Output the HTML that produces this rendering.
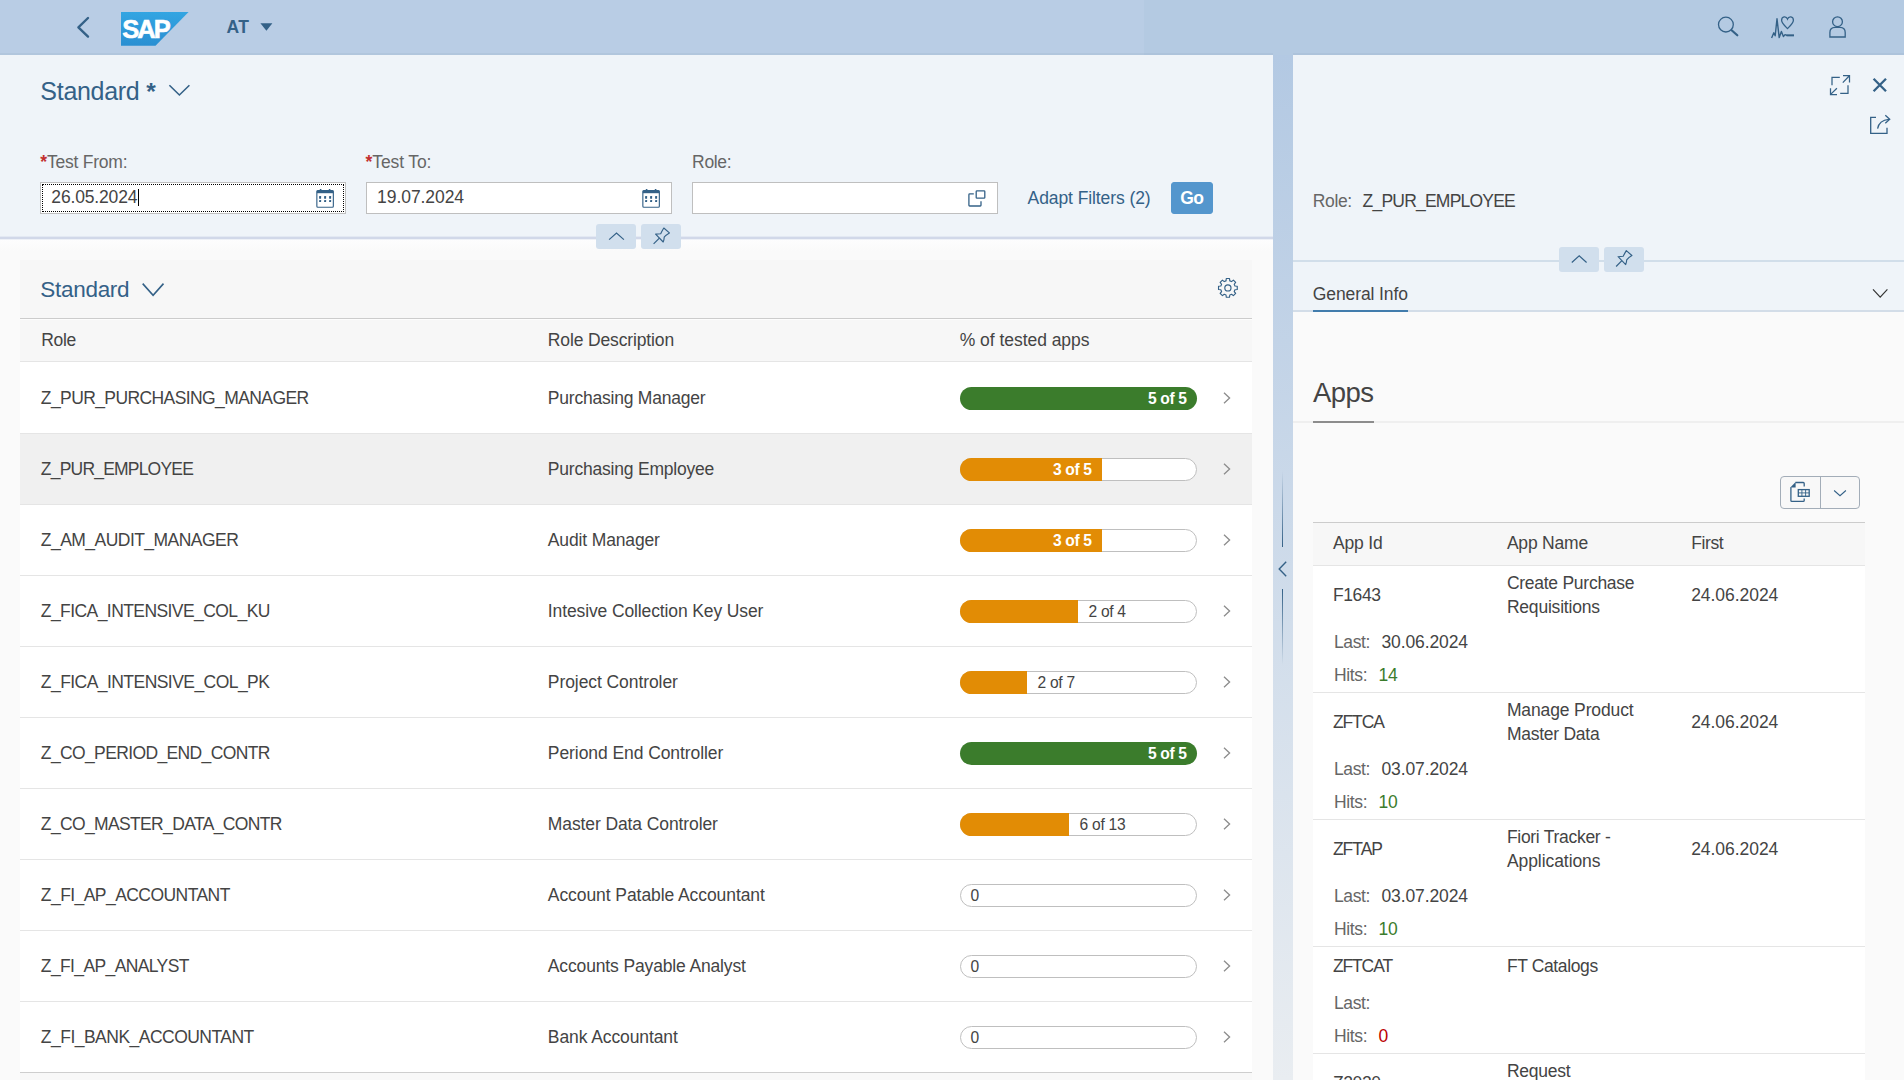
<!DOCTYPE html>
<html lang="en"><head><meta charset="utf-8"><title>Fiori Tracker</title>
<style>
*{box-sizing:border-box;margin:0;padding:0}
html,body{width:1904px;height:1080px;overflow:hidden}
body{position:relative;font-family:"Liberation Sans",sans-serif;font-size:17.5px;color:#333;background:linear-gradient(to bottom,#b3c9e3 0,#b3c9e3 55px,#e9edf1 100%)}
.t{position:absolute;white-space:nowrap;line-height:20px;display:block}
.a{position:absolute;display:block}
svg{position:absolute;display:block;overflow:visible}

</style></head>
<body>
<div class="a" style="left:0px;top:0px;width:1904px;height:55px;background:#b9cde5;"></div>
<div class="a" style="left:1144px;top:0px;width:760px;height:55px;background:#b4cae2;"></div>
<div class="a" style="left:0px;top:53px;width:1273px;height:2px;background:rgba(150,175,195,.22);"></div>
<div class="a" style="left:1293px;top:53px;width:611px;height:2px;background:rgba(150,175,195,.22);"></div>
<div class="a" style="left:0px;top:55px;width:1273px;height:181px;background:#eff4f9;"></div>
<div class="a" style="left:0px;top:239px;width:1273px;height:841px;background:#fafafa;"></div>
<div class="a" style="left:0px;top:239px;width:1273px;height:12px;background:linear-gradient(to bottom,#fdfdfe,#fafafa);"></div>
<div class="a" style="left:0px;top:236px;width:1273px;height:1px;background:#e3e9f3;"></div>
<div class="a" style="left:0px;top:237px;width:1273px;height:2px;background:#d1d8e9;"></div>
<div class="a" style="left:0px;top:239px;width:1273px;height:1px;background:#eef1f7;"></div>
<div class="a" style="left:40px;top:182px;width:306px;height:32px;background:#fff;border:1px solid #bfbfbf;outline:1px dotted #000;outline-offset:-3px;"></div>
<div class="a" style="left:366px;top:182px;width:306px;height:32px;background:#fff;border:1px solid #bfbfbf;"></div>
<div class="a" style="left:692px;top:182px;width:306px;height:32px;background:#fff;border:1px solid #bfbfbf;"></div>
<div class="a" style="left:138px;top:189px;width:1px;height:17px;background:#000;"></div>
<div class="a" style="left:1171px;top:182px;width:42px;height:32px;background:#5496cd;border-radius:3px;border:1px solid #5496cd;"></div>
<div class="a" style="left:596px;top:224px;width:40px;height:25px;background:#d1dfed;border-radius:3px;"></div>
<div class="a" style="left:641px;top:224px;width:40px;height:25px;background:#d1dfed;border-radius:3px;"></div>
<div class="a" style="left:20px;top:260px;width:1232px;height:58px;background:#f7f7f7;"></div>
<div class="a" style="left:20px;top:318px;width:1232px;height:1px;background:#cccccc;"></div>
<div class="a" style="left:20px;top:319px;width:1232px;height:42px;background:#f7f7f7;"></div>
<div class="a" style="left:20px;top:361px;width:1232px;height:1px;background:#e5e5e5;"></div>
<div class="a" style="left:20px;top:362px;width:1232px;height:711px;background:#fff;"></div>
<div class="a" style="left:20px;top:434px;width:1232px;height:70px;background:#f0f0f0;"></div>
<div class="a" style="left:20px;top:433px;width:1232px;height:1px;background:#e5e5e5;"></div>
<div class="a" style="left:20px;top:504px;width:1232px;height:1px;background:#e5e5e5;"></div>
<div class="a" style="left:20px;top:575px;width:1232px;height:1px;background:#e5e5e5;"></div>
<div class="a" style="left:20px;top:646px;width:1232px;height:1px;background:#e5e5e5;"></div>
<div class="a" style="left:20px;top:717px;width:1232px;height:1px;background:#e5e5e5;"></div>
<div class="a" style="left:20px;top:788px;width:1232px;height:1px;background:#e5e5e5;"></div>
<div class="a" style="left:20px;top:859px;width:1232px;height:1px;background:#e5e5e5;"></div>
<div class="a" style="left:20px;top:930px;width:1232px;height:1px;background:#e5e5e5;"></div>
<div class="a" style="left:20px;top:1001px;width:1232px;height:1px;background:#e5e5e5;"></div>
<div class="a" style="left:20px;top:1072px;width:1232px;height:1px;background:#e5e5e5;"></div>
<div class="a" style="left:20px;top:319px;width:1232px;height:1px;background:#fdfdfd;"></div>
<div class="a" style="left:20px;top:1072px;width:1232px;height:1px;background:#cecece;"></div>
<div class="a" style="left:20px;top:1073px;width:1232px;height:7px;background:#f8f8f8;"></div>
<div class="a" style="left:960px;top:387px;width:237px;height:23px;background:#3b7c2c;border-radius:11.5px;"></div>
<svg style="left:1223px;top:392px" width="8" height="12" viewBox="0 0 8 12"><path d="M1 .7 L6.6 6 L1 11.3" fill="none" stroke="#8c8c8c" stroke-width="1.3"/></svg>
<div class="a" style="left:960px;top:458px;width:237px;height:23px;background:#fff;border:1px solid #bfbfbf;border-radius:11.5px;"></div>
<div class="a" style="left:960px;top:458px;width:142px;height:23px;background:#e28c05;border-radius:11.5px 0 0 11.5px;"></div>
<svg style="left:1223px;top:463px" width="8" height="12" viewBox="0 0 8 12"><path d="M1 .7 L6.6 6 L1 11.3" fill="none" stroke="#8c8c8c" stroke-width="1.3"/></svg>
<div class="a" style="left:960px;top:529px;width:237px;height:23px;background:#fff;border:1px solid #bfbfbf;border-radius:11.5px;"></div>
<div class="a" style="left:960px;top:529px;width:142px;height:23px;background:#e28c05;border-radius:11.5px 0 0 11.5px;"></div>
<svg style="left:1223px;top:534px" width="8" height="12" viewBox="0 0 8 12"><path d="M1 .7 L6.6 6 L1 11.3" fill="none" stroke="#8c8c8c" stroke-width="1.3"/></svg>
<div class="a" style="left:960px;top:600px;width:237px;height:23px;background:#fff;border:1px solid #bfbfbf;border-radius:11.5px;"></div>
<div class="a" style="left:960px;top:600px;width:118px;height:23px;background:#e28c05;border-radius:11.5px 0 0 11.5px;"></div>
<svg style="left:1223px;top:605px" width="8" height="12" viewBox="0 0 8 12"><path d="M1 .7 L6.6 6 L1 11.3" fill="none" stroke="#8c8c8c" stroke-width="1.3"/></svg>
<div class="a" style="left:960px;top:671px;width:237px;height:23px;background:#fff;border:1px solid #bfbfbf;border-radius:11.5px;"></div>
<div class="a" style="left:960px;top:671px;width:67px;height:23px;background:#e28c05;border-radius:11.5px 0 0 11.5px;"></div>
<svg style="left:1223px;top:676px" width="8" height="12" viewBox="0 0 8 12"><path d="M1 .7 L6.6 6 L1 11.3" fill="none" stroke="#8c8c8c" stroke-width="1.3"/></svg>
<div class="a" style="left:960px;top:742px;width:237px;height:23px;background:#3b7c2c;border-radius:11.5px;"></div>
<svg style="left:1223px;top:747px" width="8" height="12" viewBox="0 0 8 12"><path d="M1 .7 L6.6 6 L1 11.3" fill="none" stroke="#8c8c8c" stroke-width="1.3"/></svg>
<div class="a" style="left:960px;top:813px;width:237px;height:23px;background:#fff;border:1px solid #bfbfbf;border-radius:11.5px;"></div>
<div class="a" style="left:960px;top:813px;width:109px;height:23px;background:#e28c05;border-radius:11.5px 0 0 11.5px;"></div>
<svg style="left:1223px;top:818px" width="8" height="12" viewBox="0 0 8 12"><path d="M1 .7 L6.6 6 L1 11.3" fill="none" stroke="#8c8c8c" stroke-width="1.3"/></svg>
<div class="a" style="left:960px;top:884px;width:237px;height:23px;background:#fff;border:1px solid #bfbfbf;border-radius:11.5px;"></div>
<svg style="left:1223px;top:889px" width="8" height="12" viewBox="0 0 8 12"><path d="M1 .7 L6.6 6 L1 11.3" fill="none" stroke="#8c8c8c" stroke-width="1.3"/></svg>
<div class="a" style="left:960px;top:955px;width:237px;height:23px;background:#fff;border:1px solid #bfbfbf;border-radius:11.5px;"></div>
<svg style="left:1223px;top:960px" width="8" height="12" viewBox="0 0 8 12"><path d="M1 .7 L6.6 6 L1 11.3" fill="none" stroke="#8c8c8c" stroke-width="1.3"/></svg>
<div class="a" style="left:960px;top:1026px;width:237px;height:23px;background:#fff;border:1px solid #bfbfbf;border-radius:11.5px;"></div>
<svg style="left:1223px;top:1031px" width="8" height="12" viewBox="0 0 8 12"><path d="M1 .7 L6.6 6 L1 11.3" fill="none" stroke="#8c8c8c" stroke-width="1.3"/></svg>
<div class="a" style="left:1282px;top:471px;width:1px;height:76px;background:linear-gradient(to bottom,rgba(52,97,135,0),rgba(52,97,135,1))"></div>
<div class="a" style="left:1282px;top:589px;width:1px;height:76px;background:linear-gradient(to bottom,rgba(52,97,135,1),rgba(52,97,135,0))"></div>
<svg style="left:1278px;top:561px" width="9" height="16" viewBox="0 0 9 16"><path d="M8.2 .8 L1.2 8 L8.2 15.2" fill="none" stroke="#346187" stroke-width="1.4"/></svg>
<div class="a" style="left:1293px;top:55px;width:611px;height:257px;background:#eff4f9;"></div>
<div class="a" style="left:1293px;top:260px;width:611px;height:2px;background:#d1deea;"></div>
<div class="a" style="left:1293px;top:310px;width:611px;height:2px;background:#d3dde8;"></div>
<div class="a" style="left:1293px;top:312px;width:611px;height:768px;background:#fafafa;"></div>
<div class="a" style="left:1313px;top:310px;width:95px;height:2px;background:#427cac;"></div>
<div class="a" style="left:1559px;top:247px;width:40px;height:25px;background:#d1dfed;border-radius:3px;"></div>
<div class="a" style="left:1604px;top:247px;width:40px;height:25px;background:#d1dfed;border-radius:3px;"></div>
<div class="a" style="left:1293px;top:421px;width:611px;height:2px;background:#efefef;"></div>
<div class="a" style="left:1313px;top:421px;width:61px;height:2px;background:#8c8c8c;"></div>
<div class="a" style="left:1780px;top:476px;width:80px;height:33px;background:#f8f8f8;border:1px solid #a3adb8;border-radius:4px;"></div>
<div class="a" style="left:1820px;top:477px;width:1px;height:31px;background:#a3adb8;"></div>
<div class="a" style="left:1313px;top:522px;width:552px;height:1px;background:#cccccc;"></div>
<div class="a" style="left:1313px;top:523px;width:552px;height:42px;background:#f7f7f7;"></div>
<div class="a" style="left:1313px;top:565px;width:552px;height:1px;background:#e5e5e5;"></div>
<div class="a" style="left:1313px;top:566px;width:552px;height:514px;background:#fff;"></div>
<div class="a" style="left:1313px;top:692px;width:552px;height:1px;background:#e5e5e5;"></div>
<div class="a" style="left:1313px;top:819px;width:552px;height:1px;background:#e5e5e5;"></div>
<div class="a" style="left:1313px;top:946px;width:552px;height:1px;background:#e5e5e5;"></div>
<div class="a" style="left:1313px;top:1053px;width:552px;height:1px;background:#e5e5e5;"></div><svg style="left:0;top:0" width="1904" height="1080" viewBox="0 0 1904 1080"><path d="M88 18 L78.4 27.3 L88 36.6" fill="none" stroke="#346187" stroke-width="2.4" stroke-linejoin="round" stroke-linecap="round"/>
<defs><linearGradient id="sapg" x1="0" y1="0" x2="0" y2="1"><stop offset="0" stop-color="#33a5e2"/><stop offset="1" stop-color="#2a8fd2"/></linearGradient></defs>
<path d="M121 12 H188.6 L155.5 45.8 H121 Z" fill="url(#sapg)"/>
<text x="122.2" y="38.3" font-family="Liberation Sans, sans-serif" font-weight="bold" font-size="25.5" letter-spacing="-1.9" fill="#fff" stroke="#fff" stroke-width="0.6">SAP</text>
<path d="M260.4 23.2 H272.4 L266.4 30.8 Z" fill="#346187"/>
<circle cx="1725.9" cy="24.6" r="7.4" fill="none" stroke="#346187" stroke-width="1.3"/>
<path d="M1731.6 30.2 L1737.3 35.3" fill="none" stroke="#346187" stroke-width="2.2" stroke-linecap="round"/>
<path d="M1771.6 38 L1773.8 32.8 L1775.2 35.8 L1777 18.8 L1779.2 37.6 L1781.4 31.4 L1783.4 36.6 L1785 34.6 L1787 35.4 H1794" fill="none" stroke="#346187" stroke-width="1.4" stroke-linejoin="round"/>
<path d="M1786.5 35.4 H1794" fill="none" stroke="#346187" stroke-width="1.9" />
<path d="M1787.5 28.6 C1784.5 25.5 1781.6 23 1781.6 20.2 C1781.6 16 1786.3 15.8 1787.5 19 C1788.7 15.8 1793.4 16 1793.4 20.2 C1793.4 23 1790.5 25.5 1787.5 28.6 Z" fill="none" stroke="#346187" stroke-width="1.3" />
<circle cx="1837.5" cy="21.7" r="4.9" fill="none" stroke="#346187" stroke-width="1.3"/>
<path d="M1829.9 37 V32.4 Q1829.9 27.6 1835 27.4 H1840 Q1845.2 27.6 1845.2 32.4 V37 Z" fill="none" stroke="#346187" stroke-width="1.3" />
<path d="M169.4 85.2 L179.4 95.0 L189.4 85.2" fill="none" stroke="#346187" stroke-width="1.6" />
<rect x="316.84999999999997" y="190.6" width="16.5" height="16.6" rx="1" fill="none" stroke="#346187" stroke-width="1.15"/>
<rect x="316.84999999999997" y="190.6" width="16.5" height="2.6" fill="#346187"/>
<rect x="319.8" y="189" width="1.6" height="2" fill="#346187"/><rect x="328.8" y="189" width="1.6" height="2" fill="#346187"/>
<rect x="319.09999999999997" y="196" width="2" height="2.7" rx=".5" fill="#346187"/><rect x="319.09999999999997" y="200" width="2" height="2.1" rx=".4" fill="#346187"/>
<rect x="324.09999999999997" y="196" width="2" height="2.7" rx=".5" fill="#346187"/><rect x="324.09999999999997" y="200" width="2" height="2.1" rx=".4" fill="#346187"/>
<rect x="329.09999999999997" y="196" width="2" height="2.7" rx=".5" fill="#346187"/><rect x="329.09999999999997" y="200" width="2" height="2.1" rx=".4" fill="#346187"/>
<rect x="642.85" y="190.6" width="16.5" height="16.6" rx="1" fill="none" stroke="#346187" stroke-width="1.15"/>
<rect x="642.85" y="190.6" width="16.5" height="2.6" fill="#346187"/>
<rect x="645.8000000000001" y="189" width="1.6" height="2" fill="#346187"/><rect x="654.8000000000001" y="189" width="1.6" height="2" fill="#346187"/>
<rect x="645.1" y="196" width="2" height="2.7" rx=".5" fill="#346187"/><rect x="645.1" y="200" width="2" height="2.1" rx=".4" fill="#346187"/>
<rect x="650.1" y="196" width="2" height="2.7" rx=".5" fill="#346187"/><rect x="650.1" y="200" width="2" height="2.1" rx=".4" fill="#346187"/>
<rect x="655.1" y="196" width="2" height="2.7" rx=".5" fill="#346187"/><rect x="655.1" y="200" width="2" height="2.1" rx=".4" fill="#346187"/>
<rect x="976.2" y="190.8" width="8.6" height="7.4" rx=".8" fill="none" stroke="#346187" stroke-width="1.3"/>
<path d="M973.8 193.9 H969.7 Q968.9 193.9 968.9 194.7 V205.2 Q968.9 206 969.7 206 H980.2 Q981 206 981 205.2 V201.2" fill="none" stroke="#346187" stroke-width="1.3" />
<path d="M609.1 239.6 L616.5 233.0 L623.9 239.6" fill="none" stroke="#346187" stroke-width="1.2" />
<path d="M653.6 243.9 L659.4 238.1" fill="none" stroke="#346187" stroke-width="1.2" />
<path d="M663.8 228.0 L669.4 232.9 Q665.8 235.0 664.2 237.2 Q664.1 240.0 663.2 242.0 L655.6 234.1 Q658.1 233.8 660.7 233.7 Q662.1 230.8 663.8 228.0 Z" fill="none" stroke="#346187" stroke-width="1.15" stroke-linejoin="round"/>
<path d="M1571.8 262.5 L1579.2 255.9 L1586.6000000000001 262.5" fill="none" stroke="#346187" stroke-width="1.2" />
<path d="M1616.1 266.5 L1621.9 260.7" fill="none" stroke="#346187" stroke-width="1.2" />
<path d="M1626.3 250.6 L1631.9 255.5 Q1628.3 257.6 1626.7 259.8 Q1626.6 262.6 1625.7 264.6 L1618.1 256.7 Q1620.6 256.4 1623.2 256.3 Q1624.6 253.4 1626.3 250.6 Z" fill="none" stroke="#346187" stroke-width="1.15" stroke-linejoin="round"/>
<path d="M142.7 283.6 L153.1 295.2 L163.5 283.6" fill="none" stroke="#346187" stroke-width="1.6" />
<path d="M1226.02 280.85 L1226.29 278.54 L1229.51 278.54 L1229.78 280.85 L1231.56 281.58 L1233.38 280.14 L1235.66 282.42 L1234.22 284.24 L1234.95 286.02 L1237.26 286.29 L1237.26 289.51 L1234.95 289.78 L1234.22 291.56 L1235.66 293.38 L1233.38 295.66 L1231.56 294.22 L1229.78 294.95 L1229.51 297.26 L1226.29 297.26 L1226.02 294.95 L1224.24 294.22 L1222.42 295.66 L1220.14 293.38 L1221.58 291.56 L1220.85 289.78 L1218.54 289.51 L1218.54 286.29 L1220.85 286.02 L1221.58 284.24 L1220.14 282.42 L1222.42 280.14 L1224.24 281.58 Z" fill="none" stroke="#346187" stroke-width="1.15" stroke-linejoin="round"/>
<circle cx="1227.9" cy="287.9" r="3.1" fill="none" stroke="#346187" stroke-width="1.15"/>
<path d="M1832 85.2 V77.4 H1839.8 M1848 85.2 V93.4 H1840.2" fill="none" stroke="#346187" stroke-width="1.25" />
<path d="M1842.8 82.6 L1849.4 75.8 M1843 75.7 H1849.5 V82.4" fill="none" stroke="#346187" stroke-width="1.25" />
<path d="M1836.9 88.2 L1830.6 94.4 M1830.5 88.2 V94.5 H1837" fill="none" stroke="#346187" stroke-width="1.25" />
<path d="M1873.6 78.7 L1886 91.3 M1886 78.7 L1873.6 91.3" fill="none" stroke="#346187" stroke-width="2.3" />
<path d="M1876 117.4 H1870.7 V133.3 H1887 V127.8" fill="none" stroke="#346187" stroke-width="1.3" />
<path d="M1877.6 128.6 Q1879 120.2 1889 119.3" fill="none" stroke="#346187" stroke-width="1.3" />
<path d="M1885.3 115.2 L1889.7 119.3 L1885.3 123.2" fill="none" stroke="#346187" stroke-width="1.3" />
<path d="M1873.0 289.4 L1880.2 297.2 L1887.4 289.4" fill="none" stroke="#333" stroke-width="1.2" />
<path d="M1795.4 482.5 H1803.2 Q1804.2 482.5 1804.2 483.5 V486.6 M1804.2 498.4 V500.4 Q1804.2 501.3 1803.2 501.3 H1791.8 Q1790.9 501.3 1790.9 500.4 V487.2" fill="none" stroke="#346187" stroke-width="1.3" />
<path d="M1790.3 487.6 L1795.6 481.9 V487.6 Z" fill="#346187"/>
<rect x="1798.3" y="489.6" width="10.9" height="6.7" fill="none" stroke="#346187" stroke-width="1.3"/>
<path d="M1801.9 489.6 V496.3 M1805.6 489.6 V496.3 M1798.3 492.9 H1809.2" fill="none" stroke="#346187" stroke-width="0.9" />
<path d="M1834.1 490.5 L1840 495.7 L1845.9 490.5" fill="none" stroke="#346187" stroke-width="1.1" /></svg>
<span class="t" style="left:226.60px;top:17.19px;font-size:17.5px;color:#346187;font-weight:bold;letter-spacing:0.334px;">AT</span>
<span class="t" style="left:40.35px;top:81.34px;font-size:25px;color:#346187;letter-spacing:-0.290px;">Standard</span>
<span class="t" style="left:146.20px;top:81.71px;font-size:24.5px;color:#346187;font-weight:bold;letter-spacing:0.053px;">*</span>
<span class="t" style="left:40.35px;top:151.94px;font-size:17.5px;color:#666;letter-spacing:-0.229px;"><span style="color:#c23030;font-weight:bold">*</span>Test From:</span>
<span class="t" style="left:365.60px;top:151.94px;font-size:17.5px;color:#666;letter-spacing:-0.124px;"><span style="color:#c23030;font-weight:bold">*</span>Test To:</span>
<span class="t" style="left:692.10px;top:151.94px;font-size:17.5px;color:#666;letter-spacing:-0.332px;">Role:</span>
<span class="t" style="left:51.35px;top:186.94px;font-size:17.5px;color:#444;letter-spacing:-0.164px;">26.05.2024</span>
<span class="t" style="left:377.10px;top:186.94px;font-size:17.5px;color:#444;letter-spacing:-0.064px;">19.07.2024</span>
<span class="t" style="left:1027.60px;top:188.34px;font-size:17.5px;color:#346187;letter-spacing:-0.090px;">Adapt Filters (2)</span>
<span class="t" style="left:1180.35px;top:188.14px;font-size:17.5px;color:#fff;font-weight:bold;letter-spacing:-0.806px;">Go</span>
<span class="t" style="left:40.35px;top:279.70px;font-size:22.5px;color:#346187;letter-spacing:-0.297px;">Standard</span>
<span class="t" style="left:41.35px;top:330.19px;font-size:17.5px;color:#444;letter-spacing:-0.387px;">Role</span>
<span class="t" style="left:547.85px;top:330.19px;font-size:17.5px;color:#444;letter-spacing:-0.137px;">Role Description</span>
<span class="t" style="left:959.80px;top:330.19px;font-size:17.5px;color:#444;letter-spacing:-0.048px;">% of tested apps</span>
<span class="t" style="left:40.85px;top:388.19px;font-size:17.5px;color:#444;letter-spacing:-0.596px;">Z_PUR_PURCHASING_MANAGER</span>
<span class="t" style="left:547.85px;top:388.19px;font-size:17.5px;color:#444;letter-spacing:-0.224px;">Purchasing Manager</span>
<span class="t" style="left:40.85px;top:459.19px;font-size:17.5px;color:#444;letter-spacing:-0.799px;">Z_PUR_EMPLOYEE</span>
<span class="t" style="left:547.85px;top:459.19px;font-size:17.5px;color:#444;letter-spacing:-0.212px;">Purchasing Employee</span>
<span class="t" style="left:40.85px;top:530.19px;font-size:17.5px;color:#444;letter-spacing:-0.538px;">Z_AM_AUDIT_MANAGER</span>
<span class="t" style="left:547.85px;top:530.19px;font-size:17.5px;color:#444;letter-spacing:-0.144px;">Audit Manager</span>
<span class="t" style="left:40.85px;top:601.19px;font-size:17.5px;color:#444;letter-spacing:-0.574px;">Z_FICA_INTENSIVE_COL_KU</span>
<span class="t" style="left:547.85px;top:601.19px;font-size:17.5px;color:#444;letter-spacing:-0.122px;">Intesive Collection Key User</span>
<span class="t" style="left:40.85px;top:672.19px;font-size:17.5px;color:#444;letter-spacing:-0.554px;">Z_FICA_INTENSIVE_COL_PK</span>
<span class="t" style="left:547.85px;top:672.19px;font-size:17.5px;color:#444;letter-spacing:-0.080px;">Project Controler</span>
<span class="t" style="left:40.85px;top:743.19px;font-size:17.5px;color:#444;letter-spacing:-0.628px;">Z_CO_PERIOD_END_CONTR</span>
<span class="t" style="left:547.85px;top:743.19px;font-size:17.5px;color:#444;letter-spacing:-0.073px;">Periond End Controller</span>
<span class="t" style="left:40.85px;top:814.19px;font-size:17.5px;color:#444;letter-spacing:-0.643px;">Z_CO_MASTER_DATA_CONTR</span>
<span class="t" style="left:547.85px;top:814.19px;font-size:17.5px;color:#444;letter-spacing:-0.105px;">Master Data Controler</span>
<span class="t" style="left:40.85px;top:885.19px;font-size:17.5px;color:#444;letter-spacing:-0.559px;">Z_FI_AP_ACCOUNTANT</span>
<span class="t" style="left:547.85px;top:885.19px;font-size:17.5px;color:#444;letter-spacing:-0.075px;">Account Patable Accountant</span>
<span class="t" style="left:40.85px;top:956.19px;font-size:17.5px;color:#444;letter-spacing:-0.620px;">Z_FI_AP_ANALYST</span>
<span class="t" style="left:547.85px;top:956.19px;font-size:17.5px;color:#444;letter-spacing:-0.143px;">Accounts Payable Analyst</span>
<span class="t" style="left:40.85px;top:1027.19px;font-size:17.5px;color:#444;letter-spacing:-0.519px;">Z_FI_BANK_ACCOUNTANT</span>
<span class="t" style="left:547.85px;top:1027.19px;font-size:17.5px;color:#444;letter-spacing:-0.094px;">Bank Accountant</span>
<span class="t" style="left:1148.00px;top:388.79px;font-size:15.6px;color:#fff;font-weight:bold;letter-spacing:-0.372px;">5 of 5</span>
<span class="t" style="left:1053.10px;top:459.79px;font-size:15.6px;color:#fff;font-weight:bold;letter-spacing:-0.372px;">3 of 5</span>
<span class="t" style="left:1053.10px;top:530.79px;font-size:15.6px;color:#fff;font-weight:bold;letter-spacing:-0.372px;">3 of 5</span>
<span class="t" style="left:1088.60px;top:601.79px;font-size:15.6px;color:#444;letter-spacing:-0.336px;">2 of 4</span>
<span class="t" style="left:1037.60px;top:672.79px;font-size:15.6px;color:#444;letter-spacing:-0.303px;">2 of 7</span>
<span class="t" style="left:1148.00px;top:743.79px;font-size:15.6px;color:#fff;font-weight:bold;letter-spacing:-0.372px;">5 of 5</span>
<span class="t" style="left:1079.60px;top:814.79px;font-size:15.6px;color:#444;letter-spacing:-0.284px;">6 of 13</span>
<span class="t" style="left:970.60px;top:885.79px;font-size:15.6px;color:#444;letter-spacing:-0.688px;">0</span>
<span class="t" style="left:970.60px;top:956.79px;font-size:15.6px;color:#444;letter-spacing:-0.688px;">0</span>
<span class="t" style="left:970.60px;top:1027.79px;font-size:15.6px;color:#444;letter-spacing:-0.688px;">0</span>
<span class="t" style="left:1312.80px;top:190.94px;font-size:17.5px;color:#666;letter-spacing:-0.372px;">Role:</span>
<span class="t" style="left:1362.60px;top:190.94px;font-size:17.5px;color:#444;letter-spacing:-0.785px;">Z_PUR_EMPLOYEE</span>
<span class="t" style="left:1312.80px;top:284.24px;font-size:17.5px;color:#444;letter-spacing:-0.109px;">General Info</span>
<span class="t" style="left:1312.90px;top:383.07px;font-size:27.5px;color:#444;letter-spacing:-0.497px;">Apps</span>
<span class="t" style="left:1332.90px;top:533.24px;font-size:17.5px;color:#444;letter-spacing:-0.152px;">App Id</span>
<span class="t" style="left:1506.90px;top:533.24px;font-size:17.5px;color:#444;letter-spacing:-0.198px;">App Name</span>
<span class="t" style="left:1691.20px;top:533.24px;font-size:17.5px;color:#444;letter-spacing:-0.386px;">First</span>
<span class="t" style="left:1332.90px;top:584.94px;font-size:17.5px;color:#444;letter-spacing:-0.385px;">F1643</span>
<span class="t" style="left:1506.90px;top:572.94px;font-size:17.5px;color:#444;letter-spacing:-0.262px;">Create Purchase</span>
<span class="t" style="left:1506.90px;top:596.94px;font-size:17.5px;color:#444;letter-spacing:-0.202px;">Requisitions</span>
<span class="t" style="left:1691.20px;top:584.94px;font-size:17.5px;color:#444;letter-spacing:-0.049px;">24.06.2024</span>
<span class="t" style="left:1334.00px;top:631.94px;font-size:17.5px;color:#666;letter-spacing:-0.371px;">Last:</span>
<span class="t" style="left:1381.50px;top:631.94px;font-size:17.5px;color:#444;letter-spacing:-0.119px;">30.06.2024</span>
<span class="t" style="left:1334.00px;top:664.74px;font-size:17.5px;color:#666;letter-spacing:-0.340px;">Hits:</span>
<span class="t" style="left:1378.60px;top:664.74px;font-size:17.5px;color:#3b7c2c;letter-spacing:-0.434px;">14</span>
<span class="t" style="left:1332.90px;top:711.94px;font-size:17.5px;color:#444;letter-spacing:-1.098px;">ZFTCA</span>
<span class="t" style="left:1506.90px;top:699.94px;font-size:17.5px;color:#444;letter-spacing:-0.130px;">Manage Product</span>
<span class="t" style="left:1506.90px;top:723.94px;font-size:17.5px;color:#444;letter-spacing:-0.256px;">Master Data</span>
<span class="t" style="left:1691.20px;top:711.94px;font-size:17.5px;color:#444;letter-spacing:-0.049px;">24.06.2024</span>
<span class="t" style="left:1334.00px;top:758.94px;font-size:17.5px;color:#666;letter-spacing:-0.371px;">Last:</span>
<span class="t" style="left:1381.50px;top:758.94px;font-size:17.5px;color:#444;letter-spacing:-0.119px;">03.07.2024</span>
<span class="t" style="left:1334.00px;top:791.74px;font-size:17.5px;color:#666;letter-spacing:-0.340px;">Hits:</span>
<span class="t" style="left:1378.60px;top:791.74px;font-size:17.5px;color:#3b7c2c;letter-spacing:-0.234px;">10</span>
<span class="t" style="left:1332.90px;top:838.94px;font-size:17.5px;color:#444;letter-spacing:-1.005px;">ZFTAP</span>
<span class="t" style="left:1506.90px;top:826.94px;font-size:17.5px;color:#444;letter-spacing:-0.289px;">Fiori Tracker -</span>
<span class="t" style="left:1506.90px;top:850.94px;font-size:17.5px;color:#444;letter-spacing:-0.065px;">Applications</span>
<span class="t" style="left:1691.20px;top:838.94px;font-size:17.5px;color:#444;letter-spacing:-0.049px;">24.06.2024</span>
<span class="t" style="left:1334.00px;top:885.94px;font-size:17.5px;color:#666;letter-spacing:-0.371px;">Last:</span>
<span class="t" style="left:1381.50px;top:885.94px;font-size:17.5px;color:#444;letter-spacing:-0.119px;">03.07.2024</span>
<span class="t" style="left:1334.00px;top:918.74px;font-size:17.5px;color:#666;letter-spacing:-0.340px;">Hits:</span>
<span class="t" style="left:1378.60px;top:918.74px;font-size:17.5px;color:#3b7c2c;letter-spacing:-0.234px;">10</span>
<span class="t" style="left:1332.90px;top:956.24px;font-size:17.5px;color:#444;letter-spacing:-1.114px;">ZFTCAT</span>
<span class="t" style="left:1506.90px;top:956.24px;font-size:17.5px;color:#444;letter-spacing:-0.373px;">FT Catalogs</span>
<span class="t" style="left:1334.00px;top:993.24px;font-size:17.5px;color:#666;letter-spacing:-0.371px;">Last:</span>
<span class="t" style="left:1334.00px;top:1026.24px;font-size:17.5px;color:#666;letter-spacing:-0.340px;">Hits:</span>
<span class="t" style="left:1378.60px;top:1026.24px;font-size:17.5px;color:#bb0000;letter-spacing:-0.734px;">0</span>
<span class="t" style="left:1332.90px;top:1072.94px;font-size:17.5px;color:#444;letter-spacing:-0.385px;">Z2020</span>
<span class="t" style="left:1506.90px;top:1060.94px;font-size:17.5px;color:#444;letter-spacing:-0.241px;">Request</span>
</body></html>
